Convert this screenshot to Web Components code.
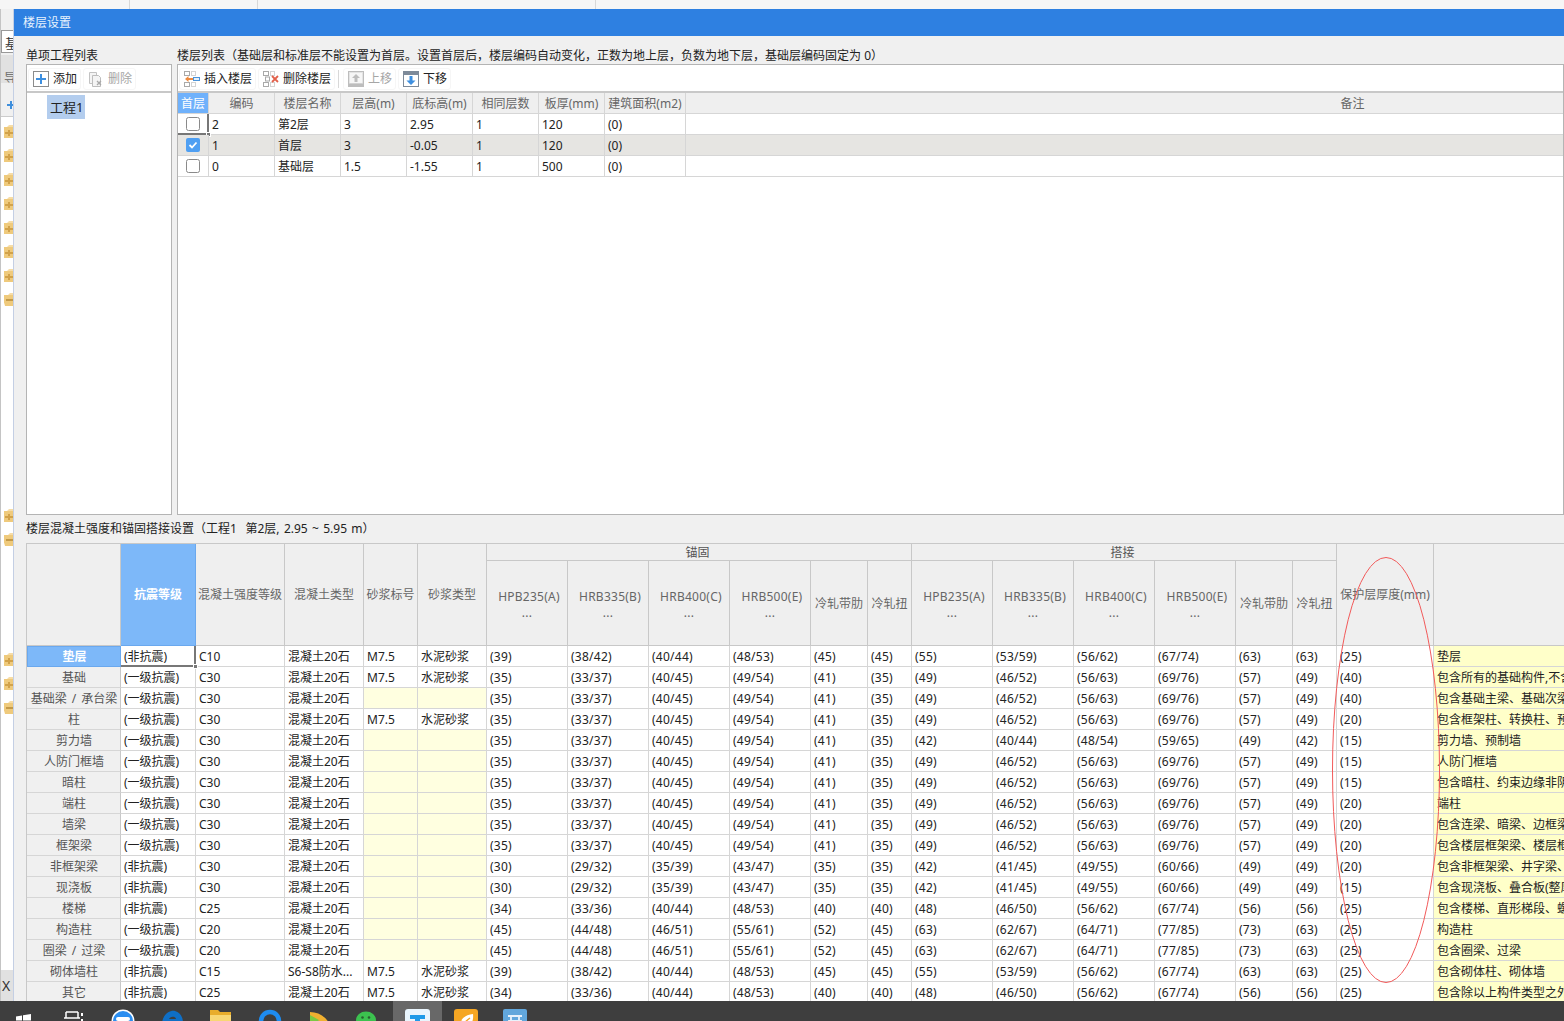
<!DOCTYPE html>
<html lang="zh-CN">
<head>
<meta charset="utf-8">
<title>楼层设置</title>
<style>
  html, body { margin: 0; padding: 0; height: 1021px; overflow: hidden; background: #f0f0f0; }
  body { font: 12px/1.2 "Noto Sans", "Noto Sans CJK SC", sans-serif; color: #222; }
</style>
</head>
<body>
<app-shell>
  <host-strip slot="side"></host-strip>
  <floor-dialog></floor-dialog>
  <task-bar slot="bar"></task-bar>
</app-shell>

<script>
(function() {
  'use strict';

  const FONT = '"Noto Sans", "Noto Sans CJK SC", sans-serif';

  // ── Window shell ──────────────────────────────────────────────
  class AppShell extends HTMLElement {
    constructor() {
      super();
      this.attachShadow({ mode: 'open' }).innerHTML = `
        <style>
          :host { display: flex; flex-direction: column; width: 1564px; height: 1021px; overflow: hidden; }
          .tabs { display: flex; height: 9px; flex: none; background: #f6f6f6; }
          .tabs i { display: block; box-sizing: border-box; border-right: 1px solid #d8d8d8; }
          .main { display: flex; height: 992px; flex: none; overflow: hidden; }
          .bar { flex: none; height: 20px; }
        </style>
        <div class="tabs"><i style="width:130px"></i><i style="width:128px"></i><i style="width:338px"></i></div>
        <div class="main"><slot name="side"></slot><slot></slot></div>
        <div class="bar"><slot name="bar"></slot></div>`;
    }
  }

  // ── What shows of the main program left of the dialog ─────────
  class HostStrip extends HTMLElement {
    constructor() {
      super();
      const closed = `<svg class="f" width="10" height="13" viewBox="0 0 10 13"><path d="M5 0h4v2H3z" fill="#f6dca6"/><rect y="2" width="10" height="11" fill="#efca7c"/><path d="M4 5h2v2h3v2H6v2H4V9H1V7h3z" fill="#d2a24a"/></svg>`;
      const open = `<svg class="f" width="10" height="13" viewBox="0 0 10 13"><path d="M6 0h4v2H4z" fill="#f6dca6"/><path d="M-2 2h12v11H1z" fill="#efca7c"/><rect x="2" y="6" width="8" height="2" fill="#c49a48"/></svg>`;
      this.attachShadow({ mode: 'open' }).innerHTML = `
        <style>
          :host { display: block; width: 14px; height: 992px; flex: none; box-sizing: border-box; background: #fff;
                  border-left: 1px solid #c4c4c4; border-right: 1px solid #c4cfe4; overflow: hidden;
                  font: 13px ${FONT}; color: #333; }
          .a { height: 18px; background: #f0f0f0; }
          .tab { height: 28px; background: #f0f0f0; padding-top: 3px; box-sizing: border-box; }
          .tab div { height: 23px; box-sizing: border-box; border: 1px solid #999; border-right: 0; background: #fff; padding: 2px 0 0 3px; overflow: hidden; white-space: nowrap; }
          .gray { height: 28px; background: #e1e1e1; padding: 14px 0 0 3px; box-sizing: border-box; color: #777; overflow: hidden; line-height: 16px; }
          .plus { height: 33px; box-sizing: content-box; background: #f0f0f0; border-bottom: 1px solid #ccc; padding: 0; overflow: hidden; }
          .plus svg { display: block; position: relative; top: 18px; left: 6px; }
          .tree { height: 884px; padding-top: 8px; box-sizing: border-box; position: relative; }
          .f { display: block; margin: 0 0 11px 3px; }
          .gap1 { height: 192px; }
          .gap2 { height: 96px; }
          .x { position: absolute; left: 0; right: 0; bottom: 0; height: 31px; background: #e1e1e1; font-size: 14px; line-height: 31px; padding-left: 1px; color: #333; }
        </style>
        <div class="a"></div>
        <div class="tab"><div>基</div></div>
        <div class="gray">导</div>
        <div class="plus"><svg width="8" height="8" viewBox="0 0 8 8"><path d="M3 0h2v3h3v2H5v3H3V5H0V3h3z" fill="#3f8fdc"/></svg></div>
        <div class="tree">
          ${closed.repeat(7)}${open}
          <div class="gap1"></div>
          ${closed}${open}
          <div class="gap2"></div>
          ${closed.repeat(2)}${open}
          <div class="x">X</div>
        </div>`;
    }
  }

  // ── Toolbar button ────────────────────────────────────────────
  const ICONS = {
    add: `<rect x=".5" y=".5" width="15" height="15" fill="#fff" stroke="#8c8c8c"/><path d="M7 3h2v4h4v2H9v4H7V9H3V7h4z" fill="#3d8fe0"/>`,
    del: `<path d="M1.500 1.500h7v11h-7z" fill="#f4f4f4" stroke="#c2c2c2"/><path d="M4.500 4.500h6l2 2v9h-8z" fill="#f4f4f4" stroke="#bdbdbd"/><path d="M9 10l4 4m0-4l-4 4" stroke="#a8a8a8" stroke-width="1.300"/>`,
    ins: `<g fill="none" stroke="#a9a9a9"><rect x=".5" y=".5" width="5" height="4"/><rect x="7.5" y=".5" width="4" height="4" stroke-dasharray="1 1"/><rect x=".5" y="11.5" width="5" height="4"/><rect x="7.5" y="11.5" width="4" height="4" stroke-dasharray="1 1"/></g><rect x="9.5" y="6.5" width="6" height="3" fill="#e4f0fb" stroke="#4b93d8"/><path d="M1 8l3.500-3v2H9v2H4.500v2z" fill="#ee8a3e"/>`,
    rem: `<g fill="none" stroke="#a9a9a9"><rect x=".5" y=".5" width="5" height="4"/><rect x="7.5" y=".5" width="4" height="4" stroke-dasharray="1 1"/><rect x="2.500" y="6" width="4" height="4"/><rect x=".5" y="11.5" width="5" height="4"/><rect x="7.5" y="11.5" width="4" height="4" stroke-dasharray="1 1"/></g><path d="M9 5l6 6m0-6l-6 6" stroke="#e2604a" stroke-width="1.800"/>`,
    up: `<rect x=".5" y=".5" width="15" height="15" fill="#e4e4e4" stroke="#bdbdbd"/><rect x="2" y="2" width="12" height="10" fill="#f6f6f6"/><path d="M8 3l4 4H9.500v4h-3V7H4z" fill="#bdbdbd"/><rect x="1" y="12.500" width="14" height="3" fill="#bdbdbd"/>`,
    down: `<rect x=".5" y=".5" width="15" height="15" fill="#fff" stroke="#7d8a99"/><rect x="1" y="1" width="14" height="3" fill="#7d8a99"/><path d="M8 14l-4.500-4.500H6.500V5h3v4.500h3z" fill="#3d8fe0"/>`
  };

  class ToolButton extends HTMLElement {
    static get observedAttributes() { return ['icon']; }
    constructor() {
      super();
      this.attachShadow({ mode: 'open' }).innerHTML = `
        <style>
          :host { display: flex; align-items: center; gap: 4px; height: 22px; box-sizing: border-box; padding: 0 3px 0 4px;
                  border: 1px solid #f6f6f6; border-radius: 3px; background: #fff; white-space: nowrap; color: #222; }
          :host([disabled]) { color: #a6a6a6; }
          svg { display: block; flex: none; }
        </style>
        <svg width="16" height="16" viewBox="0 0 16 16"></svg><slot></slot>`;
    }
    attributeChangedCallback(name, old, val) {
      this.shadowRoot.querySelector('svg').innerHTML = ICONS[val] || '';
    }
  }

  // ── Upper grid: floors ────────────────────────────────────────
  class FloorGrid extends HTMLElement {
    constructor() {
      super();
      const heads = ['首层', '编码', '楼层名称', '层高(m)', '底标高(m)', '相同层数', '板厚(mm)', '建筑面积(m2)', '备注'];
      const rows = [
        [false, '2', '第2层', '3', '2.95', '1', '120', '(0)', ''],
        [true, '1', '首层', '3', '-0.05', '1', '120', '(0)', ''],
        [false, '0', '基础层', '1.5', '-1.55', '1', '500', '(0)', '']
      ];
      let html = heads.map((h, i) => `<div class="h${i === 0 ? ' on' : ''}">${h}</div>`).join('');
      rows.forEach((r, ri) => {
        r.forEach((v, ci) => {
          const cls = 'c' + (r[0] ? ' sel' : '');
          if (ci === 0) {
            const box = v
              ? `<svg width="14" height="14" viewBox="0 0 14 14"><rect width="14" height="14" rx="2" fill="#4f9ff2"/><path d="M3.500 7l2.500 2.500 4.500-5" fill="none" stroke="#fff" stroke-width="1.800"/></svg>`
              : `<svg width="14" height="14" viewBox="0 0 14 14"><rect x=".5" y=".5" width="13" height="13" rx="2" fill="#fff" stroke="#8a8a8a"/></svg>`;
            html += `<div class="${cls} chk${ri === 0 ? ' act' : ''}">${box}${ri === 0 ? '<b></b>' : ''}</div>`;
          } else {
            html += `<div class="${cls}">${v}</div>`;
          }
        });
      });
      this.attachShadow({ mode: 'open' }).innerHTML = `
        <style>
          :host { display: grid; grid-template-columns: 31px 66px 66px 66px 66px 66px 66px 81px 1334px; grid-auto-rows: 21px; }
          .h, .c { box-sizing: border-box; border-right: 1px solid #d6d6d6; border-bottom: 1px solid #d6d6d6; white-space: nowrap; overflow: hidden; line-height: 22px; }
          .h { background: #efefef; color: #666; text-align: center; }
          .h.on { background: #6fb1fb; color: #fff; }
          .c { background: #fff; padding-left: 3px; color: #222; }
          .c.sel { background: #e6e5e2; }
          .chk { padding: 3px 0 0 8px; overflow: visible; position: relative; }
          .chk svg { display: block; }
          .act { border-right: 2px solid #777; border-bottom: 2px solid #777; }
          .act b { position: absolute; right: -4px; bottom: -4px; background: #777; border: 1px solid #fff; width: 3px; height: 3px; }
        </style>${html}`;
    }
  }

  // ── Lower grid: concrete, anchorage, lap ──────────────────────
  const A1 = ['(35)', '(33/37)', '(40/45)', '(49/54)', '(41)', '(35)'];
  const L1 = ['(49)', '(46/52)', '(56/63)', '(69/76)', '(57)', '(49)'];
  const A2 = ['(30)', '(29/32)', '(35/39)', '(43/47)', '(35)', '(35)'];
  const L2 = ['(42)', '(41/45)', '(49/55)', '(60/66)', '(49)', '(49)'];
  const A3 = ['(34)', '(33/36)', '(40/44)', '(48/53)', '(40)', '(40)'];
  const L3 = ['(48)', '(46/50)', '(56/62)', '(67/74)', '(56)', '(56)'];
  const A4 = ['(45)', '(44/48)', '(46/51)', '(55/61)', '(52)', '(45)'];
  const L4 = ['(63)', '(62/67)', '(64/71)', '(77/85)', '(73)', '(63)'];
  const A5 = ['(39)', '(38/42)', '(40/44)', '(48/53)', '(45)', '(45)'];
  const L5 = ['(55)', '(53/59)', '(56/62)', '(67/74)', '(63)', '(63)'];
  const L6 = ['(42)', '(40/44)', '(48/54)', '(59/65)', '(49)', '(42)'];
  const NON = '(非抗震)', ONE = '(一级抗震)', C20S = '混凝土20石', M = 'M7.5', W = '水泥砂浆';

  const REBAR_ROWS = [
    ['垫层', NON, 'C10', C20S, M, W, A5, L5, '(25)', '垫层'],
    ['基础', ONE, 'C30', C20S, M, W, A1, L1, '(40)', '包含所有的基础构件,不含垫层'],
    ['基础梁 / 承台梁', ONE, 'C30', C20S, '', '', A1, L1, '(40)', '包含基础主梁、基础次梁、'],
    ['柱', ONE, 'C30', C20S, M, W, A1, L1, '(20)', '包含框架柱、转换柱、预制柱'],
    ['剪力墙', ONE, 'C30', C20S, '', '', A1, L6, '(15)', '剪力墙、预制墙'],
    ['人防门框墙', ONE, 'C30', C20S, '', '', A1, L1, '(15)', '人防门框墙'],
    ['暗柱', ONE, 'C30', C20S, '', '', A1, L1, '(15)', '包含暗柱、约束边缘非阴影区'],
    ['端柱', ONE, 'C30', C20S, '', '', A1, L1, '(20)', '端柱'],
    ['墙梁', ONE, 'C30', C20S, '', '', A1, L1, '(20)', '包含连梁、暗梁、边框梁'],
    ['框架梁', ONE, 'C30', C20S, '', '', A1, L1, '(20)', '包含楼层框架梁、楼层框架扁梁'],
    ['非框架梁', NON, 'C30', C20S, '', '', A2, L2, '(20)', '包含非框架梁、井字梁、'],
    ['现浇板', NON, 'C30', C20S, '', '', A2, L2, '(15)', '包含现浇板、叠合板(整厚)'],
    ['楼梯', NON, 'C25', C20S, '', '', A3, L3, '(25)', '包含楼梯、直形梯段、螺旋梯段'],
    ['构造柱', ONE, 'C20', C20S, '', '', A4, L4, '(25)', '构造柱'],
    ['圈梁 / 过梁', ONE, 'C20', C20S, '', '', A4, L4, '(25)', '包含圈梁、过梁'],
    ['砌体墙柱', NON, 'C15', 'S6-S8防水...', M, W, A5, L5, '(25)', '包含砌体柱、砌体墙'],
    ['其它', NON, 'C25', C20S, M, W, A3, L3, '(25)', '包含除以上构件类型之外的']
  ];

  class RebarGrid extends HTMLElement {
    constructor() {
      super();
      const bars = ['HPB235(A)', 'HRB335(B)', 'HRB400(C)', 'HRB500(E)'];
      const span2 = (t, cls) => `<div class="h tall ${cls || ''}">${t}</div>`;
      const sub = t => `<div class="h">${t}</div>`;
      const bar = t => `<div class="h two">${t}<br><span>...</span></div>`;
      const set = () => bars.map(bar).join('') + sub('冷轧带肋') + sub('冷轧扭');

      let html = span2('', '') + span2('抗震等级', 'on') + span2('混凝土强度等级') + span2('混凝土类型') + span2('砂浆标号') + span2('砂浆类型');
      html += `<div class="h grp">锚固</div><div class="h grp">搭接</div>`;
      html += span2('保护层厚度(mm)') + span2('');
      html += set() + set();

      REBAR_ROWS.forEach((r, ri) => {
        const active = ri === 0;
        html += `<div class="rh${active ? ' on' : ''}">${r[0]}</div>`;
        html += `<div class="c${active ? ' act' : ''}">${r[1]}${active ? '<b></b>' : ''}</div>`;
        html += `<div class="c">${r[2]}</div><div class="c">${r[3]}</div>`;
        html += `<div class="c${r[4] ? '' : ' y'}">${r[4]}</div><div class="c${r[5] ? '' : ' y'}">${r[5]}</div>`;
        html += r[6].concat(r[7]).map(v => `<div class="c n">${v}</div>`).join('');
        html += `<div class="c n">${r[8]}</div><div class="c note">${r[9]}</div>`;
      });

      this.attachShadow({ mode: 'open' }).innerHTML = `
        <style>
          :host { display: grid; position: relative; box-sizing: border-box; width: 1538px; border-top: 1px solid #c8c8c8; border-left: 1px solid #c8c8c8;
                  grid-template-columns: 94px 75px 89px 79px 54px 69px 81px 81px 81px 81px 57px 44px 81px 81px 81px 81px 57px 44px 97px 131px;
                  grid-template-rows: 17px 85px; grid-auto-rows: 21px; }
          .h { box-sizing: border-box; background: #efefef; color: #666; border-right: 1px solid #c8c8c8; border-bottom: 1px solid #c8c8c8; padding-top: 2px;
               display: flex; align-items: center; justify-content: center; text-align: center; white-space: nowrap; overflow: hidden; }
          .tall { grid-row: span 2; }
          .grp { grid-column: span 6; color: #555; padding-right: 3px; }
          .two { display: block; padding-top: 27px; line-height: 18px; letter-spacing: .25px; padding-left: 4px; }
          .two span { display: block; line-height: 14px; margin-left: -4px; }
          .on { background: #7db8f9; color: #fff; font-weight: 700; border-color: #6aa8ee; }
          .rh { box-sizing: border-box; background: #f0f0f0; color: #555; border-right: 1px solid #c8c8c8; border-bottom: 1px solid #d6d6d6; padding-left: 1px; text-align: center; line-height: 22px; white-space: nowrap; overflow: hidden; word-spacing: 2px; }
          .rh.on { background: #7db8f9; color: #fff; border: 1px solid #6aa8ee; line-height: 20px; }
          .c { position: relative; box-sizing: border-box; background: #fff; color: #222; padding-left: 3px; border-right: 1px solid #d6d6d6; border-bottom: 1px solid #d6d6d6; line-height: 22px; white-space: nowrap; overflow: hidden; }
          .n { letter-spacing: .25px; }
          .y { background: #ffffe0; }
          .note { background: #ffffc9; }
          .act { border-right: 2px solid #777; border-bottom: 2px solid #777; overflow: visible; z-index: 1; }
          .act b { position: absolute; right: -4px; bottom: -4px; width: 3px; height: 3px; background: #777; border: 1px solid #fff; }
        </style>${html}`;
    }
  }

  // ── Small shells for the panels ───────────────────────────────
  class TitledPane extends HTMLElement {
    constructor() {
      super();
      this.attachShadow({ mode: 'open' }).innerHTML = `
        <style>
          :host { display: flex; flex-direction: column; min-width: 0; }
          .t { height: 28px; box-sizing: border-box; padding-top: 12px; line-height: 16px; color: #222; white-space: nowrap; flex: none; }
          .b { height: 451px; box-sizing: border-box; background: #fff; border: 1px solid #b4b4b4; overflow: hidden; display: flex; flex-direction: column; }
        </style>
        <div class="t"><slot name="title"></slot></div>
        <div class="b"><slot></slot></div>`;
    }
  }

  class ToolRow extends HTMLElement {
    constructor() {
      super();
      this.attachShadow({ mode: 'open' }).innerHTML = `
        <style>
          :host { display: flex; align-items: center; gap: 2px; height: 28px; flex: none; box-sizing: border-box; padding: 2px 0 0 1px; border-bottom: 2px solid #c8c8c8; background: #fff; }
          ::slotted(.sep) { width: 1px; height: 18px; background: #d8d8d8; margin: 0 2px 0 1px; }
        </style><slot></slot>`;
    }
  }

  // ── Dialog ────────────────────────────────────────────────────
  class FloorDialog extends HTMLElement {
    constructor() {
      super();
      this.attachShadow({ mode: 'open' }).innerHTML = `
        <style>
          :host { display: flex; flex-direction: column; flex: 1; min-width: 0; height: 992px; overflow: hidden; background: #f0f0f0; position: relative; }
          .title { height: 27px; flex: none; background: #2e80e1; color: #e8f2fd; padding-left: 9px; line-height: 27px; font-size: 12px; }
          .panes { display: grid; grid-template-columns: 146px 1fr; gap: 5px; padding-left: 12px; flex: none; }
          .tree { flex: 1; padding: 2px 0 0 20px; }
          .node { display: inline-block; box-sizing: border-box; width: 38px; background: #b3cdee; padding: 0 0 0 3px; height: 24px; line-height: 24px; font-size: 13px; color: #222; white-space: nowrap; }
          .cap { height: 28px; box-sizing: border-box; flex: none; padding: 6px 0 0 12px; line-height: 16px; white-space: nowrap; color: #222; word-spacing: 1.2px; }
          .lower { padding-left: 12px; flex: none; }
          .oval { position: absolute; left: 1318px; top: 548px; pointer-events: none; overflow: visible; z-index: 2; }
        </style>
        <div class="title">楼层设置</div>
        <div class="panes">
          <titled-pane>
            <span slot="title">单项工程列表</span>
            <tool-row>
              <tool-button icon="add">添加</tool-button>
              <tool-button icon="del" disabled>删除</tool-button>
            </tool-row>
            <div class="tree"><span class="node">工程1</span></div>
          </titled-pane>
          <titled-pane>
            <span slot="title">楼层列表（基础层和标准层不能设置为首层。设置首层后，楼层编码自动变化，正数为地上层，负数为地下层，基础层编码固定为 0）</span>
            <tool-row>
              <tool-button icon="ins">插入楼层</tool-button>
              <tool-button icon="rem">删除楼层</tool-button>
              <span class="sep"></span>
              <tool-button icon="up" disabled>上移</tool-button>
              <tool-button icon="down">下移</tool-button>
            </tool-row>
            <floor-grid></floor-grid>
          </titled-pane>
        </div>
        <div class="cap">楼层混凝土强度和锚固搭接设置（工程1&nbsp;&nbsp;第2层, 2.95 ~ 5.95 m）</div>
        <div class="lower"><rebar-grid></rebar-grid></div>
        <svg class="oval" width="108" height="426" viewBox="0 0 108 426"><ellipse cx="54" cy="213" rx="53.500" ry="212.500" fill="none" stroke="#f25a5a" stroke-width="1"/></svg>`;
    }
  }

  // ── Windows task bar, cut by the bottom of the picture ────────
  class TaskBar extends HTMLElement {
    constructor() {
      super();
      const icons = [
        `<path d="M2 5.500l6-1v5H2zM9 4.300l8-1.300v6.500H9zM2 10.500h6v5l-6-1zM9 10.500h8V17l-8-1.300z" fill="#fff" transform="translate(1 2)"/>`,
        `<g transform="translate(-1 -3)"><path d="M5 6h12M5 6v6M17 6v6M3 12h16" fill="none" stroke="#fff" stroke-width="1.500"/><rect x="20" y="7" width="2" height="3" fill="#fff"/><rect x="20" y="13" width="2" height="3" fill="#fff"/></g>`,
        `<circle cx="12" cy="12" r="11.500" fill="#fff"/><circle cx="12" cy="12" r="10" fill="#2b8ef0"/><rect x="5" y="8" width="14" height="4" rx="2" fill="#fff"/>`,
        `<path d="M2 14C3 5 10 1 15 2c5 1 8 6 8 12H9c0 4 6 6 12 3v4H2z" fill="#0f6fc6"/><path d="M9 10h7c-.5-3-5.500-3-7 0z" fill="#3e3e3e"/>`,
        `<path d="M1 1h8l2 2h11v19H1z" fill="#e8ad2c"/><rect x="1" y="6" width="21" height="15" fill="#f8d774"/>`,
        `<circle cx="12" cy="12" r="9" fill="none" stroke="#1e8cf0" stroke-width="4.500"/>`,
        `<path d="M3 6l18 10L3 26z" fill="#2ca8e8"/><path d="M3 3c8 0 15 4 19 11L3 10z" fill="#f0b030"/><path d="M3 6l9 5-9 6z" fill="#7ac943"/>`,
        `<ellipse cx="10" cy="11" rx="10" ry="8.500" fill="#3cc24f"/><circle cx="6.500" cy="8.500" r="1.300" fill="#2a5f30"/><circle cx="13" cy="8.500" r="1.300" fill="#2a5f30"/><ellipse cx="18" cy="18" rx="6" ry="5" fill="#e8e8e8"/>`,
        `<rect x="0" y="0" width="25" height="24" rx="3" fill="#e9f5fd"/><path d="M5 6h15v4h-5v12h-5V10H5z" fill="#1f9ae8"/>`,
        `<rect x="0" y="0" width="24" height="24" rx="3" fill="#f5a623"/><path d="M4 22C5 11 10 6 19 5c1 7-3 15-8 17z" fill="#fff"/><path d="M8 18c2-4 5-7 8-9M7 12l5 3" stroke="#f5a623" stroke-width="1.500" fill="none"/>`,
        `<rect x="0" y="0" width="24" height="24" rx="2" fill="#62a7dc"/><path d="M5 7h14M8 7v5M16 7v5M6 12h12v9H6z" stroke="#e8f2fb" stroke-width="1.800" fill="none"/>`
      ];
      const tiles = icons.map((p, i) => `<div class="tile${i === 8 ? ' on' : ''}"><svg width="24" height="24" viewBox="0 0 24 24">${p}</svg></div>`).join('');
      this.attachShadow({ mode: 'open' }).innerHTML = `
        <style>
          :host { display: flex; height: 20px; background: #3e3e3e; padding-left: 1px; overflow: hidden; }
          .tile { width: 49px; height: 20px; flex: none; box-sizing: border-box; padding: 8px 0 0 12px; overflow: hidden; }
          .tile.on { background: #686868; }
          svg { display: block; overflow: visible; }
        </style>${tiles}`;
    }
  }

  customElements.define('app-shell', AppShell);
  customElements.define('host-strip', HostStrip);
  customElements.define('tool-button', ToolButton);
  customElements.define('floor-grid', FloorGrid);
  customElements.define('rebar-grid', RebarGrid);
  customElements.define('titled-pane', TitledPane);
  customElements.define('tool-row', ToolRow);
  customElements.define('floor-dialog', FloorDialog);
  customElements.define('task-bar', TaskBar);
})();
</script>
</body>
</html>
